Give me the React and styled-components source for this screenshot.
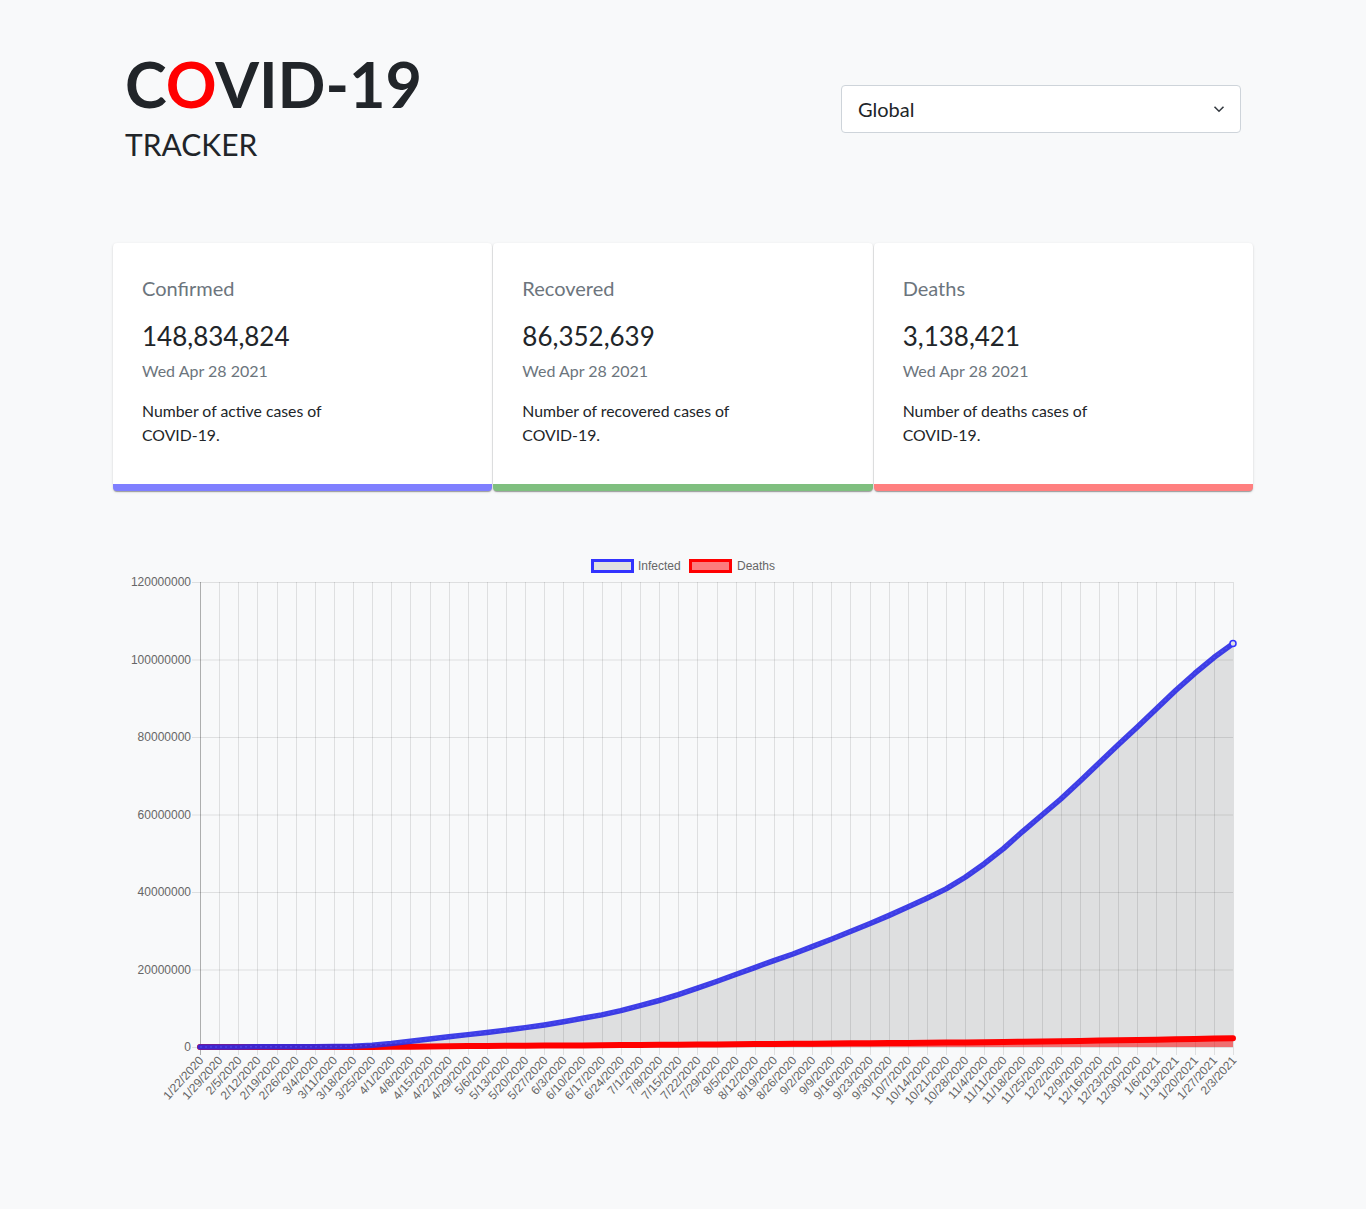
import React from "react";
import styled, { createGlobalStyle } from "styled-components";

const GlobalStyle = createGlobalStyle`
  body {
    margin: 0;
    background: #f8f9fa;
    font-family: Lato, "Open Sans", sans-serif;
    color: #212529;
  }
`;

// weekly cumulative totals in millions, starting 1/22/2020
const infected = [
  0.0006, 0.006, 0.028, 0.045, 0.075, 0.082, 0.095, 0.126, 0.219, 0.47,
  0.93, 1.5, 2.06, 2.62, 3.19, 3.76, 4.35, 5.0, 5.7, 6.5,
  7.4, 8.3, 9.4, 10.7, 12.0, 13.5, 15.2, 16.9, 18.7, 20.5,
  22.3, 24.0, 25.9, 27.8, 29.8, 31.8, 33.9, 36.1, 38.4, 40.8,
  43.8, 47.3, 51.2, 55.6, 59.8, 64.0, 68.6, 73.3, 78.0, 82.6,
  87.3, 92.0, 96.4, 100.5, 104.1,
];

const deaths = [
  0, 0.0002, 0.0006, 0.0014, 0.002, 0.0028, 0.0032, 0.0044, 0.009, 0.021,
  0.047, 0.089, 0.137, 0.183, 0.228, 0.264, 0.297, 0.327, 0.356, 0.383,
  0.414, 0.448, 0.485, 0.517, 0.553, 0.59, 0.63, 0.67, 0.711, 0.752,
  0.791, 0.831, 0.869, 0.906, 0.943, 0.981, 1.017, 1.057, 1.095, 1.138,
  1.181, 1.231, 1.289, 1.358, 1.428, 1.501, 1.577, 1.657, 1.733, 1.807,
  1.897, 1.995, 2.094, 2.19, 2.277,
];

const cards = [
  {
    title: "Confirmed",
    value: "148,834,824",
    text: "Number of active cases of COVID-19.",
    accent: "rgba(0, 0, 255, 0.5)",
  },
  {
    title: "Recovered",
    value: "86,352,639",
    text: "Number of recovered cases of COVID-19.",
    accent: "rgba(0, 128, 0, 0.5)",
  },
  {
    title: "Deaths",
    value: "3,138,421",
    text: "Number of deaths cases of COVID-19.",
    accent: "rgba(255, 0, 0, 0.5)",
  },
];

const labelFor = (i) => {
  const d = new Date(Date.UTC(2020, 0, 22 + i * 7));
  return `${d.getUTCMonth() + 1}/${d.getUTCDate()}/${d.getUTCFullYear()}`;
};

const Chart = () => {
  const W = 1140;
  const H = 570;
  const PL = 87;
  const PR = 1120;
  const PT = 32;
  const PB = 497;
  const n = infected.length - 1;
  const xAt = (i) => PL + (i * (PR - PL)) / n;
  const yAt = (v) => PB - (v / 120) * (PB - PT);

  const line = (arr) =>
    arr.map((v, i) => `${i ? "L" : "M"}${xAt(i).toFixed(2)},${yAt(v).toFixed(2)}`).join(" ");
  const area = (arr) => `${line(arr)} L${PR},${PB} L${PL},${PB} Z`;

  const yTicks = [0, 20, 40, 60, 80, 100, 120];

  return (
    <svg width={W} height={H} viewBox={`0 0 ${W} ${H}`}>
      <g fontFamily="'Liberation Sans', Arial, sans-serif" fontSize="12" fill="#666">
        {/* legend */}
        <rect x="479.5" y="10.5" width="40" height="11" fill="#e0e0e2" stroke="#3333ff" strokeWidth="3" />
        <text x="525" y="20">Infected</text>
        <rect x="577.5" y="10.5" width="40" height="11" fill="rgba(255,0,0,0.5)" stroke="#ff0000" strokeWidth="3" />
        <text x="624" y="20">Deaths</text>

        {/* grid */}
        {yTicks.map((t) => (
          <g key={t}>
            <line x1={PL - 8} x2={PR} y1={yAt(t) + 0.5} y2={yAt(t) + 0.5} stroke="rgba(0,0,0,0.1)" />
            <text x={PL - 9} y={yAt(t) + 4} textAnchor="end">
              {t === 0 ? "0" : `${t}000000`}
            </text>
          </g>
        ))}
        {infected.map((_, i) => (
          <g key={i}>
            <line
              x1={Math.round(xAt(i)) + 0.5}
              x2={Math.round(xAt(i)) + 0.5}
              y1={PT}
              y2={PB + 8}
              stroke={i === 0 ? "rgba(0,0,0,0.3)" : "rgba(0,0,0,0.1)"}
            />
            <text
              transform={`translate(${xAt(i) + 1}, ${PB + 11}) rotate(-48)`}
              textAnchor="end"
              dy="0.35em"
            >
              {labelFor(i)}
            </text>
          </g>
        ))}
      </g>

      {/* data */}
      <path d={area(infected)} fill="rgba(0,0,0,0.1)" />
      <path d={area(deaths)} fill="rgba(255,0,0,0.5)" />
      <path d={line(deaths)} fill="none" stroke="#ff0000" strokeWidth="6" strokeLinejoin="round" strokeLinecap="round" />
      <path d={line(infected)} fill="none" stroke="#2a2ae4" strokeOpacity="0.9" strokeWidth="5.5" strokeLinejoin="round" strokeLinecap="round" />
      <path d={line(infected)} fill="none" stroke="#5a5af5" strokeOpacity="0.5" strokeWidth="1.5" strokeDasharray="2 3" />
      <circle cx={xAt(n)} cy={yAt(infected[n])} r="3" fill="#e0e0e2" stroke="#3333ff" strokeWidth="1.5" />
    </svg>
  );
};

const App = () => {
  return (
    <>
      <GlobalStyle />
      <Page>
        <Header>
          <Brand>
            <Title>
              C<Red>O</Red>VID-19
            </Title>
            <Subtitle>TRACKER</Subtitle>
          </Brand>
          <Select>
            <span>Global</span>
            <svg width="12" height="8" viewBox="0 0 12 8">
              <path d="M1.5 1.8 L6 6.2 L10.5 1.8" fill="none" stroke="#343a40" strokeWidth="1.6" />
            </svg>
          </Select>
        </Header>

        <Cards>
          {cards.map((c) => (
            <Card key={c.title} $accent={c.accent}>
              <Label>{c.title}</Label>
              <Count>{c.value}</Count>
              <DateText>Wed Apr 28 2021</DateText>
              <Desc>{c.text}</Desc>
            </Card>
          ))}
        </Cards>

        <ChartWrap>
          <Chart />
        </ChartWrap>
      </Page>
    </>
  );
};

const Page = styled.div`
  width: 1140px;
  margin: 0 auto;
  padding-bottom: 89px;
`;

const Header = styled.header`
  display: flex;
  justify-content: space-between;
  align-items: flex-start;
  padding: 52px 12px 0;
  height: 192px;
  box-sizing: border-box;
`;

const Brand = styled.div`
  display: flex;
  flex-direction: column;
`;

const Title = styled.h1`
  margin: 0;
  font-size: 63px;
  line-height: 1;
  font-weight: 700;
  color: #212529;
`;

const Red = styled.span`
  color: #ff0000;
`;

const Subtitle = styled.div`
  margin-top: 14px;
  font-size: 30px;
  line-height: 1;
  color: #212529;
`;

const Select = styled.div`
  margin-top: 33px;
  width: 400px;
  height: 48px;
  box-sizing: border-box;
  border: 1px solid #ced4da;
  border-radius: 4px;
  background: #fff;
  display: flex;
  align-items: center;
  justify-content: space-between;
  padding: 0 15px 0 16px;
  font-size: 20px;
  color: #212529;
`;

const Cards = styled.div`
  display: grid;
  grid-template-columns: repeat(3, 1fr);
  gap: 1px;
  margin-top: 51px;
`;

const Card = styled.div`
  background: #fff;
  border-radius: 4px;
  box-shadow: 0 2px 1px -1px rgba(0, 0, 0, 0.2), 0 1px 1px 0 rgba(0, 0, 0, 0.14),
    0 1px 3px 0 rgba(0, 0, 0, 0.12);
  border-bottom: 7px solid ${(p) => p.$accent};
  padding: 29px 29px 36px;
  height: 248px;
  box-sizing: border-box;
`;

const Label = styled.div`
  font-size: 20px;
  line-height: 32px;
  color: #6c757d;
`;

const Count = styled.div`
  margin-top: 16px;
  font-size: 26px;
  line-height: 32px;
  color: #212529;
`;

const DateText = styled.div`
  margin-top: 7px;
  font-size: 16px;
  line-height: 24px;
  color: #6c757d;
`;

const Desc = styled.div`
  margin-top: 16px;
  max-width: 215px;
  font-size: 15.8px;
  line-height: 24px;
  color: #212529;
`;

const ChartWrap = styled.div`
  margin-top: 59px;
  display: flex;
`;

export default App;
